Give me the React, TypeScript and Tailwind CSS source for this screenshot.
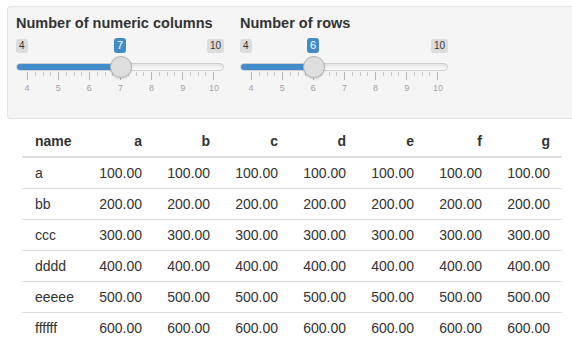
import React from "react";

const TICK_START = 11;
const UNIT = 31;

function Slider({ value }: { value: number }) {
  const handleX = TICK_START + (value - 4) * UNIT;
  const majors = [4, 5, 6, 7, 8, 9, 10];
  const ticks = Array.from({ length: 25 }, (_, i) => i % 4 === 0);
  return (
    <div className="w-[208px] pt-[6px]">
      <div className="relative flex justify-between">
        <span className="h-[14px] px-[3px] rounded-[3px] bg-[#dcdcdc] text-[10px] leading-[14px] text-[#333]">4</span>
        <span className="h-[14px] px-[3px] rounded-[3px] bg-[#dcdcdc] text-[10px] leading-[14px] text-[#333]">10</span>
        <span
          className="absolute -top-[1px] h-[15px] w-[12px] -ml-[6px] rounded-[3px] bg-[#428bca] text-center text-[11px] leading-[15px] text-white"
          style={{ left: handleX }}
        >
          {value}
        </span>
      </div>
      <div className="relative mt-[10px] h-[8px] w-[208px]">
        <div className="h-full w-full overflow-hidden rounded-full border border-[#cfcfcf] bg-gradient-to-b from-[#e4e4e4] to-[#fafafa]">
          <div className="-ml-px -mt-px h-[8px] bg-[#428bca]" style={{ width: handleX }} />
        </div>
        <div
          className="absolute -top-[7px] h-[22px] w-[22px] -ml-[11px] rounded-full border border-[#b5b5b5] bg-[#dedede] shadow-[0_1px_2px_rgba(0,0,0,0.15)]"
          style={{ left: handleX + 0.5 }}
        />
      </div>
      <div className="ml-[11px] mt-px flex w-[187px] items-start justify-between">
        {ticks.map((major, i) => (
          <span key={i} className={major ? "h-[8px] w-px bg-[#b5b5b5]" : "h-[4px] w-px bg-[#c8c8c8]"} />
        ))}
      </div>
      <div className="ml-[1px] mt-[3px] flex w-[207px] justify-between">
        {majors.map((m) => (
          <span key={m} className="w-[20px] text-center text-[9px] leading-[11px] text-[#a3a3a3]">
            {m}
          </span>
        ))}
      </div>
    </div>
  );
}

const rows = ["a", "bb", "ccc", "dddd", "eeeee", "ffffff"];
const cols = ["a", "b", "c", "d", "e", "f", "g"];

export default function App() {
  return (
    <div className="w-[572px] h-[353px] overflow-hidden bg-white font-['Liberation_Sans',Arial,sans-serif] text-[#333]">
      <div className="ml-[7px] mt-[6px] h-[113px] w-[565px] rounded-l-[4px] border border-r-0 border-[#e3e3e3] bg-[#f5f5f5] pl-[8px] pt-[6px]">
        <div className="flex gap-[16px]">
          <div className="w-[208px]">
            <div className="text-[14.5px] font-bold leading-[20px] whitespace-nowrap">Number of numeric columns</div>
            <Slider value={7} />
          </div>
          <div className="w-[208px]">
            <div className="text-[14.5px] font-bold leading-[20px] whitespace-nowrap">Number of rows</div>
            <Slider value={6} />
          </div>
        </div>
      </div>
      <table className="ml-[22px] mt-[7px] w-[540px] table-fixed border-collapse text-[14px] leading-[20px]">
        <colgroup>
          <col className="w-[57px]" />
          <col className="w-[68px]" />
          <col className="w-[68px]" />
          <col className="w-[68px]" />
          <col className="w-[68px]" />
          <col className="w-[68px]" />
          <col className="w-[68px]" />
          <col className="w-[75px]" />
        </colgroup>
        <thead>
          <tr className="border-b-2 border-[#dddddd]">
            <th className="py-[5px] pl-[13px] text-left font-bold">name</th>
            {cols.map((c, i) => (
              <th
                key={c}
                className={
                  "py-[5px] text-right font-bold " + (i === cols.length - 1 ? "pr-[12px]" : "pr-[5px]")
                }
              >
                {c}
              </th>
            ))}
          </tr>
        </thead>
        <tbody>
          {rows.map((r, ri) => (
            <tr key={r} className={ri === 0 ? "" : "border-t border-[#dddddd]"}>
              <td className="py-[5px] pl-[13px] text-left">{r}</td>
              {cols.map((c, i) => (
                <td
                  key={c}
                  className={"py-[5px] text-right " + (i === cols.length - 1 ? "pr-[12px]" : "pr-[5px]")}
                >
                  {((ri + 1) * 100).toFixed(2)}
                </td>
              ))}
            </tr>
          ))}
        </tbody>
      </table>
    </div>
  );
}
